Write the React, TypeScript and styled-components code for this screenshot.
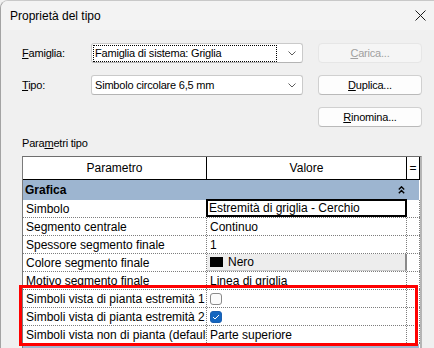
import styled, { createGlobalStyle } from "styled-components";

const GlobalStyle = createGlobalStyle`
  html, body {
    margin: 0;
    padding: 0;
    background: #f0f0f0;
  }
  body {
    font-family: "Liberation Sans", Arial, sans-serif;
    color: #000;
  }
`;

const Window = styled.div`
  width: 434px;
  height: 348px;
  box-sizing: border-box;
  overflow: hidden;
  border-left: 1px solid #a3a3a3;
  border-top: 1px solid #c8c8c8;
  border-top-left-radius: 8px;
  background: #f0f0f0;
  display: flex;
  flex-direction: column;
`;

const TitleBar = styled.div`
  height: 29px;
  flex: 0 0 auto;
  display: flex;
  align-items: center;
  justify-content: space-between;
  padding: 0 8px 0 9px;
  background: #f3f3f3;
  font-size: 12px;
`;

const Body = styled.div`
  padding: 13px 0 0 21px;
  display: flex;
  flex-direction: column;
`;

const TopGrid = styled.div`
  display: grid;
  grid-template-columns: 54px 212px 104px;
  grid-auto-rows: 20px;
  column-gap: 15px;
  row-gap: 12px;
  font-size: 11px;
  letter-spacing: -0.2px;
`;

const Label = styled.div`
  display: flex;
  align-items: center;
  white-space: nowrap;
`;

const Key = styled.span`
  text-decoration: underline;
  text-underline-offset: 1px;
`;

const Combo = styled.div`
  box-sizing: border-box;
  display: flex;
  align-items: center;
  padding: 0 6px 0 2px;
  background: #fff;
  border: 1px solid #cacaca;
  border-bottom-color: #b4b4b4;
  border-radius: 3px;
`;

const ComboText = styled.div<{ $focused?: boolean }>`
  flex: 1;
  height: 15px;
  margin-right: 12px;
  padding-left: 1px;
  display: flex;
  align-items: center;
  outline: ${(p) => (p.$focused ? "1px dotted #000" : "none")};
`;

const Button = styled.div<{ $disabled?: boolean }>`
  box-sizing: border-box;
  display: flex;
  align-items: center;
  justify-content: center;
  border-radius: 4px;
  background: ${(p) => (p.$disabled ? "#f5f5f5" : "#fdfdfd")};
  border: 1px solid ${(p) => (p.$disabled ? "#e6e6e6" : "#d0d0d0")};
  border-bottom-color: ${(p) => (p.$disabled ? "#e6e6e6" : "#b9b9b9")};
  color: ${(p) => (p.$disabled ? "#a0a0a0" : "#000")};
`;

const SectionLabel = styled.div`
  margin-top: 8px;
  line-height: 16px;
  font-size: 11px;
  letter-spacing: -0.2px;
`;

const Table = styled.div`
  position: relative;
  margin-top: 5px;
  width: 400px;
  box-sizing: border-box;
  border-top: 1px solid #6e6e6e;
  border-left: 1px solid #7a7a7a;
  border-right: 2px solid #b5b5b5;
  background: #fff;
  font-size: 12px;
`;

const HeaderRow = styled.div`
  display: flex;
  height: 23px;
  box-sizing: border-box;
  border-bottom: 1px solid #000;
`;

const HeaderCell = styled.div<{ $w: number }>`
  width: ${(p) => p.$w}px;
  box-sizing: border-box;
  border-right: 1px solid #000;
  display: flex;
  align-items: center;
  justify-content: center;
`;

const GroupRow = styled.div`
  height: 20px;
  display: flex;
  align-items: center;
  justify-content: space-between;
  padding: 0 14px 0 2px;
  margin-right: 1px;
  background: #9db5d0;
  font-weight: bold;
`;

const Row = styled.div`
  display: flex;
  height: 18px;
  box-sizing: border-box;
  border-bottom: 1px dotted #7d7d7d;
`;

const NameCell = styled.div`
  width: 184px;
  box-sizing: border-box;
  padding-left: 3px;
  border-right: 1px dotted #7d7d7d;
  display: flex;
  align-items: center;
  white-space: nowrap;
  overflow: hidden;
`;

const ValueCell = styled.div<{ $kind?: "edit" | "button" }>`
  width: 200px;
  box-sizing: border-box;
  display: flex;
  align-items: center;
  gap: 5px;
  white-space: nowrap;
  overflow: hidden;
  padding-left: ${(p) => (p.$kind === "edit" ? "1px" : "3px")};
  border-right: ${(p) =>
    p.$kind === "button" ? "2px solid #8a8a8a" : "1px dotted #7d7d7d"};
  ${(p) =>
    p.$kind === "edit" &&
    `
    border: 2px solid #000;
    margin-left: -1px;
    width: 201px;
    margin-top: -1px;
    height: 18px;
  `}
  ${(p) =>
    p.$kind === "button" &&
    `
    background: #ededed;
    border-bottom: 1px solid #c9c9c9;
  `}
`;

const EqCell = styled.div`
  width: 13px;
  box-sizing: border-box;
  border-right: 1px dotted #7d7d7d;
  display: flex;
  align-items: center;
  justify-content: center;
`;

const Swatch = styled.span`
  width: 13px;
  height: 10px;
  background: #000;
`;

const Check = styled.span<{ $on?: boolean }>`
  width: 12px;
  height: 12px;
  box-sizing: border-box;
  border-radius: 3px;
  border: 1px solid ${(p) => (p.$on ? "#1b5fb0" : "#8a8a8a")};
  background: ${(p) => (p.$on ? "#1466c0" : "#fbfbfb")};
  display: flex;
  align-items: center;
  justify-content: center;
`;

const Highlight = styled.div`
  position: absolute;
  top: 128px;
  left: -4px;
  width: 399px;
  height: 61px;
  box-sizing: border-box;
  border: 3px solid #f00;
  pointer-events: none;
`;

const rows: { name: string; value?: string; kind?: "edit" | "button" | "check"; on?: boolean }[] = [
  { name: "Simbolo", value: "Estremità di griglia - Cerchio", kind: "edit" },
  { name: "Segmento centrale", value: "Continuo" },
  { name: "Spessore segmento finale", value: "1" },
  { name: "Colore segmento finale", value: "Nero", kind: "button" },
  { name: "Motivo segmento finale", value: "Linea di griglia" },
  { name: "Simboli vista di pianta estremità 1", kind: "check" },
  { name: "Simboli vista di pianta estremità 2", kind: "check", on: true },
  { name: "Simboli vista non di pianta (default)", value: "Parte superiore" },
];

function Chevron() {
  return (
    <svg width="8" height="5" viewBox="0 0 8 5">
      <path d="M0.5 0.5 L4 4 L7.5 0.5" fill="none" stroke="#5c5c5c" strokeWidth="1" />
    </svg>
  );
}

function App() {
  return (
    <>
      <GlobalStyle />
      <Window>
        <TitleBar>
          <span>Proprietà del tipo</span>
          <svg width="11" height="11" viewBox="0 0 11 11">
            <path d="M0.5 0.5 L10.5 10.5 M10.5 0.5 L0.5 10.5" stroke="#1a1a1a" strokeWidth="1" />
          </svg>
        </TitleBar>
        <Body>
          <TopGrid>
            <Label>
              <span>
                <Key>F</Key>amiglia:
              </span>
            </Label>
            <Combo>
              <ComboText $focused>Famiglia di sistema: Griglia</ComboText>
              <Chevron />
            </Combo>
            <Button $disabled>
              <span>
                <Key>C</Key>arica...
              </span>
            </Button>

            <Label>
              <span>
                <Key>T</Key>ipo:
              </span>
            </Label>
            <Combo>
              <ComboText>Simbolo circolare 6,5 mm</ComboText>
              <Chevron />
            </Combo>
            <Button>
              <span>
                <Key>D</Key>uplica...
              </span>
            </Button>

            <span />
            <span />
            <Button>
              <span>
                <Key>R</Key>inomina...
              </span>
            </Button>
          </TopGrid>

          <SectionLabel>
            Para<Key>m</Key>etri tipo
          </SectionLabel>

          <Table>
            <HeaderRow>
              <HeaderCell $w={184}>Parametro</HeaderCell>
              <HeaderCell $w={200}>Valore</HeaderCell>
              <HeaderCell $w={13}>=</HeaderCell>
            </HeaderRow>
            <GroupRow>
              <span>Grafica</span>
              <svg width="7" height="8" viewBox="0 0 7 8">
                <path d="M0.8 3.5 L3.5 0.8 L6.2 3.5 M0.8 7.2 L3.5 4.5 L6.2 7.2" fill="none" stroke="#000" strokeWidth="1.4" />
              </svg>
            </GroupRow>
            {rows.map((r) => (
              <Row key={r.name}>
                <NameCell>{r.name}</NameCell>
                <ValueCell $kind={r.kind === "edit" || r.kind === "button" ? r.kind : undefined}>
                  {r.kind === "button" && <Swatch />}
                  {r.kind === "check" ? (
                    <Check $on={r.on}>
                      {r.on && (
                        <svg width="8" height="6" viewBox="0 0 8 6">
                          <path d="M1 3 L3 5 L7 1" fill="none" stroke="#fff" strokeWidth="1" />
                        </svg>
                      )}
                    </Check>
                  ) : (
                    r.value
                  )}
                </ValueCell>
                <EqCell />
              </Row>
            ))}
            <GroupRow />
            <Highlight />
          </Table>
        </Body>
      </Window>
    </>
  );
}

export default App;
